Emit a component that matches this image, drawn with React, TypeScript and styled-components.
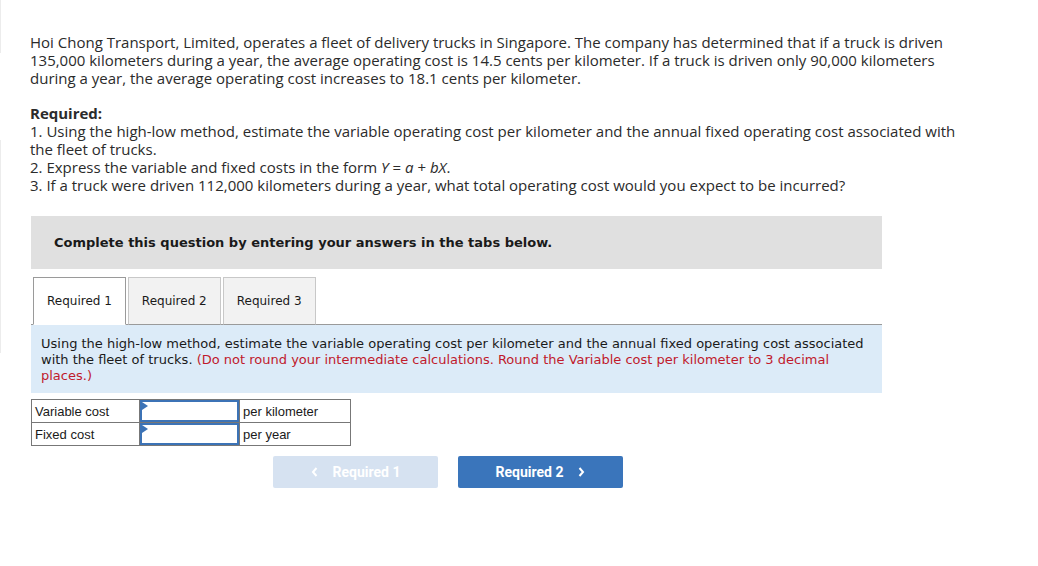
import React from "react";
import styled, { createGlobalStyle } from "styled-components";

const Global = createGlobalStyle`
  html, body { margin: 0; padding: 0; background: #fff; }
  body { font-family: "Open Sans", "Lato", sans-serif; color: #2b2b2b; }
  * { box-sizing: border-box; }
`;

const Page = styled.div`
  position: relative;
  padding: 34px 0 0 30px;
  min-height: 566px;
`;

const Rail = styled.div<{ $top: number; $h: number }>`
  position: absolute;
  left: 0;
  top: ${(p) => p.$top}px;
  width: 1px;
  height: ${(p) => p.$h}px;
  background: #ececec;
`;

const Body = styled.div`
  width: 980px;
  font-size: 15px;
  line-height: 17.8px;
  color: #2b2b2b;
`;

const Para = styled.p`
  margin: 0 0 18px 0;
`;

const Strong = styled.div`
  font-weight: 700;
`;

const Line = styled.div``;

const Ital = styled.i`
  font-style: italic;
`;

const Workspace = styled.div`
  margin: 22px 0 0 1px;
  width: 851px;
`;

const Banner = styled.div`
  height: 53px;
  background: #e0e0e0;
  display: flex;
  align-items: center;
  padding-left: 23px;
  font-family: "DejaVu Sans", Verdana, sans-serif;
  font-weight: 700;
  font-size: 13px;
  color: #1a1a1a;
`;

const Tabs = styled.div`
  display: flex;
  margin-top: 8px;
  align-items: flex-end;
`;

const Tab = styled.div<{ $active?: boolean }>`
  height: 48px;
  margin-left: 2px;
  padding: 0 13px;
  display: flex;
  align-items: center;
  font-family: "DejaVu Sans", Verdana, sans-serif;
  font-size: 12px;
  color: #1a1a1a;
  background: ${(p) => (p.$active ? "#fff" : "#f2f2f2")};
  border: 1px solid ${(p) => (p.$active ? "#9a9a9a" : "#c8c8c8")};
  border-bottom: ${(p) => (p.$active ? "1px solid #fff" : "1px solid #9a9a9a")};
  margin-bottom: -1px;
  position: relative;
  z-index: ${(p) => (p.$active ? 1 : 0)};
`;

const Instructions = styled.div`
  background: #dcebf8;
  border-top: 1px solid #9a9a9a;
  padding: 11px 10px 9px 10px;
  font-family: "DejaVu Sans", Verdana, sans-serif;
  font-size: 13px;
  line-height: 16px;
  color: #1a1a1a;
`;

const Red = styled.span`
  color: #c01a2c;
`;

const Table = styled.table`
  margin-top: 6px;
  border-collapse: collapse;
  font-family: "Liberation Sans", Arial, sans-serif;
  font-size: 13px;
  color: #1a1a1a;
`;

const Cell = styled.td<{ $w: number }>`
  width: ${(p) => p.$w}px;
  height: 23px;
  border: 1px solid #777;
  padding: 0 3px;
`;

const InputCell = styled.td`
  width: 100px;
  height: 23px;
  border: 1px solid #777;
  padding: 0;
`;

const InputBox = styled.div`
  position: relative;
  height: 22px;
  border: 2px solid #3c73b6;
  background: #fff;
`;

const Flag = styled.div`
  position: absolute;
  left: 0;
  top: 0;
  width: 0;
  height: 0;
  border-top: 4px solid transparent;
  border-bottom: 4px solid transparent;
  border-left: 6px solid #3c73b6;
`;

const Nav = styled.div`
  display: flex;
  gap: 20px;
  margin: 10px 0 0 242px;
`;

const NavButton = styled.div<{ $primary?: boolean }>`
  width: 165px;
  height: 32px;
  border-radius: 2px;
  background: ${(p) => (p.$primary ? "#3a75bb" : "#d6e2f1")};
  color: #fff;
  font-family: "Roboto", "Liberation Sans", sans-serif;
  font-weight: 700;
  font-size: 14px;
  display: flex;
  align-items: center;
  justify-content: center;
  gap: 14px;
`;

const Chevron = ({ dir }: { dir: "left" | "right" }) => (
  <svg width="8" height="12" viewBox="0 0 8 12">
    <path
      d={dir === "left" ? "M5.5 2 L2 6 L5.5 10" : "M2.5 2 L6 6 L2.5 10"}
      fill="none"
      stroke="#fff"
      strokeWidth="2"
    />
  </svg>
);

export default function App() {
  return (
    <>
      <Global />
      <Page>
        <Rail $top={0} $h={53} />
        <Rail $top={140} $h={213} />
        <Body>
          <Para>
            Hoi Chong Transport, Limited, operates a fleet of delivery trucks in Singapore. The company has determined
            that if a truck is driven
            <br />
            135,000 kilometers during a year, the average operating cost is 14.5 cents per kilometer. If a truck is
            driven only 90,000 kilometers
            <br />
            during a year, the average operating cost increases to 18.1 cents per kilometer.
          </Para>
          <Strong>Required:</Strong>
          <Line>
            1. Using the high-low method, estimate the variable operating cost per kilometer and the annual fixed
            operating cost associated with
            <br />
            the fleet of trucks.
          </Line>
          <Line>
            2. Express the variable and fixed costs in the form <Ital>Y</Ital> = <Ital>a</Ital> + <Ital>bX</Ital>.
          </Line>
          <Line>
            3. If a truck were driven 112,000 kilometers during a year, what total operating cost would you expect to be
            incurred?
          </Line>
        </Body>
        <Workspace>
          <Banner>Complete this question by entering your answers in the tabs below.</Banner>
          <Tabs>
            <Tab $active>Required 1</Tab>
            <Tab>Required 2</Tab>
            <Tab>Required 3</Tab>
          </Tabs>
          <Instructions>
            Using the high-low method, estimate the variable operating cost per kilometer and the annual fixed operating
            cost associated with the fleet of trucks.{" "}
            <Red>
              (Do not round your intermediate calculations. Round the Variable cost per kilometer to 3 decimal places.)
            </Red>
          </Instructions>
          <Table>
            <tbody>
              <tr>
                <Cell $w={108}>Variable cost</Cell>
                <InputCell>
                  <InputBox>
                    <Flag />
                  </InputBox>
                </InputCell>
                <Cell $w={111}>per kilometer</Cell>
              </tr>
              <tr>
                <Cell $w={108}>Fixed cost</Cell>
                <InputCell>
                  <InputBox>
                    <Flag />
                  </InputBox>
                </InputCell>
                <Cell $w={111}>per year</Cell>
              </tr>
            </tbody>
          </Table>
          <Nav>
            <NavButton>
              <Chevron dir="left" />
              Required 1
            </NavButton>
            <NavButton $primary>
              Required 2
              <Chevron dir="right" />
            </NavButton>
          </Nav>
        </Workspace>
      </Page>
    </>
  );
}
